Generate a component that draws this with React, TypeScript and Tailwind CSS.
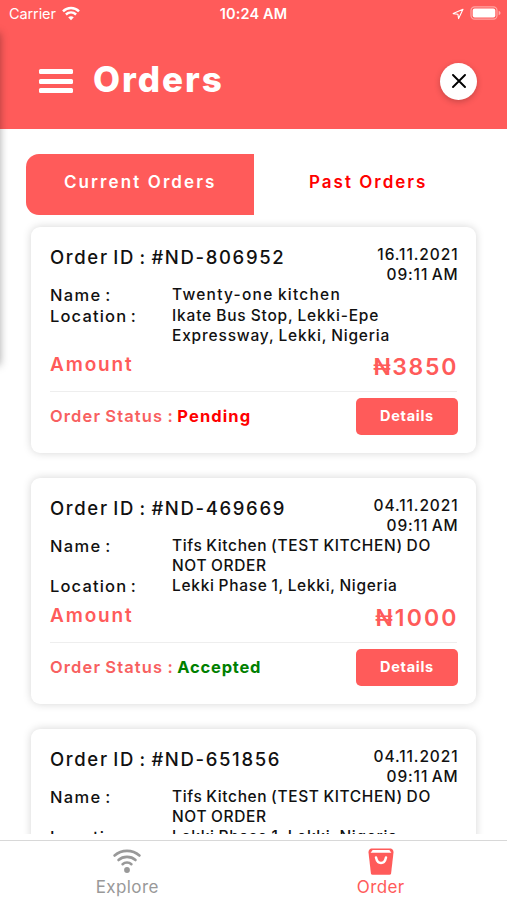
type Order = {
  id: string;
  date: string;
  dateClass: string;
  name: string;
  nameClass: string;
  location: string;
  locationClass: string;
  amount: string;
  amountClass: string;
  status: 'Pending' | 'Accepted';
};

const orders: Order[] = [
  {
    id: '#ND-806952',
    date: '16.11.2021',
    dateClass: 'tracking-[0.900px]',
    name: 'Twenty-one kitchen',
    nameClass: 'tracking-[1.250px] [word-spacing:-1px]',
    location: 'Ikate Bus Stop, Lekki-Epe Expressway, Lekki, Nigeria',
    locationClass: 'tracking-[0.820px] [word-spacing:-0.800px]',
    amount: '₦3850',
    amountClass: 'tracking-[1.670px] -mr-[1px]',
    status: 'Pending',
  },
  {
    id: '#ND-469669',
    date: '04.11.2021',
    dateClass: 'tracking-[0.880px]',
    name: 'Tifs Kitchen (TEST KITCHEN) DO NOT ORDER',
    nameClass: 'tracking-[0.640px] [word-spacing:-1px]',
    location: 'Lekki Phase 1, Lekki, Nigeria',
    locationClass: 'tracking-[0.710px] [word-spacing:-1px]',
    amount: '₦1000',
    amountClass: 'tracking-[2.100px] -mr-[1.500px]',
    status: 'Accepted',
  },
  {
    id: '#ND-651856',
    date: '04.11.2021',
    dateClass: 'tracking-[0.880px]',
    name: 'Tifs Kitchen (TEST KITCHEN) DO NOT ORDER',
    nameClass: 'tracking-[0.640px] [word-spacing:-1px]',
    location: 'Lekki Phase 1, Lekki, Nigeria',
    locationClass: 'tracking-[0.710px] [word-spacing:-1px]',
    amount: '₦1000',
    amountClass: 'tracking-[2.100px] -mr-[1.500px]',
    status: 'Accepted',
  },
];

function WifiFan({ className }: { className: string }) {
  return (
    <svg viewBox="0 0 18 14" className={className} fill="none" stroke="currentColor">
      <path d="M1 4.800C5.500.5 12.500.5 17 4.800" strokeWidth="2.500" />
      <path d="M3.900 8C6.900 5.200 11.100 5.200 14.100 8" strokeWidth="2.400" />
      <path d="M9 13.700 6.200 10.800Q9 8.500 11.800 10.800Z" fill="currentColor" stroke="none" />
    </svg>
  );
}

function StatusBar() {
  return (
    <div className="grid h-7 grid-cols-3 items-center pr-[5px] pl-[9px] text-[14.500px] text-white">
      <div className="flex items-center gap-[6px]">
        <span className="tracking-[-0.100px]">Carrier</span>
        <WifiFan className="-mt-[2px] h-[15px] w-[18px]" />
      </div>
      <span className="-ml-1 text-center font-semibold tracking-[0.140px]">10:24 AM</span>
      <div className="flex items-center justify-end gap-[6px]">
        <svg viewBox="0 0 12 12" className="h-3 w-3" fill="none" stroke="white" strokeWidth="1.100" strokeLinejoin="round">
          <path d="M11 1.200 6.600 10.600 5.900 6.200 1.200 5.600Z" />
        </svg>
        <svg viewBox="0 0 32 14" className="-mt-[2px] h-[14px] w-8" fill="none">
          <rect x="1" y=".8" width="26" height="12.400" rx="3.600" stroke="white" strokeOpacity=".45" strokeWidth="1.200" />
          <rect x="2.700" y="2.500" width="22.600" height="9" rx="2" fill="white" />
          <path d="M28.700 4.800Q30.600 5.500 30.600 7T28.700 9.200Z" fill="white" fillOpacity=".5" />
        </svg>
      </div>
    </div>
  );
}

function Header() {
  return (
    <header className="h-[129px] shrink-0 bg-[#ff5b5a]">
      <StatusBar />
      <div className="flex h-[106px] items-center pr-[30px] pl-[39px]">
        <div className="flex w-[34px] flex-col gap-[4.500px]">
          <span className="h-[5px] rounded-[1.500px] bg-white" />
          <span className="h-[5px] rounded-[1.500px] bg-white" />
          <span className="h-[5px] rounded-[1.500px] bg-white" />
        </div>
        <h1 className="mt-[-4px] ml-[20px] text-[35px] leading-10 font-extrabold tracking-[2px] text-white">Orders</h1>
        <button className="ml-auto flex h-[37px] w-[37px] items-center justify-center rounded-full bg-white shadow-[0_2px_6px_rgba(0,0,0,0.22)]">
          <svg viewBox="0 0 14 14" className="h-[14px] w-[14px]" stroke="black" strokeWidth="1.900" strokeLinecap="round">
            <path d="M1 1 13 13M13 1 1 13" />
          </svg>
        </button>
      </div>
    </header>
  );
}

function OrderCard({ order }: { order: Order }) {
  return (
    <article className="h-[226px] shrink-0 rounded-[9px] bg-white px-[19px] pt-[18px] shadow-[0_0_8px_rgba(0,0,0,0.17)]">
      <div className="flex h-10 justify-between font-medium">
        <h2 className="text-[18.500px] leading-6 font-medium tracking-[1.650px] whitespace-nowrap [word-spacing:-2px]">
          Order ID : {order.id}
        </h2>
        <div className="-mr-[1.500px] text-right text-[15.500px] leading-5">
          <div className={order.dateClass}>{order.date}</div>
          <div className="tracking-[0.850px] [word-spacing:-1.500px]">09:11 AM</div>
        </div>
      </div>
      <dl className="grid grid-cols-[122px_1fr] text-[15.500px] leading-5 font-medium">
        <dt className="text-[16.500px] leading-[21px] tracking-[1.350px] [word-spacing:-2px]">Name :</dt>
        <dd className={order.nameClass}>{order.name}</dd>
        <dt className="text-[16.500px] leading-[21px] tracking-[1.150px] [word-spacing:-2px]">Location :</dt>
        <dd className={`pr-8 ${order.locationClass}`}>{order.location}</dd>
      </dl>
      <div className="flex h-[46px] items-start justify-between border-b border-[#eeeeee] font-semibold text-[#ff5b5a]">
        <span className="pt-[7px] text-[19px] leading-6 tracking-[1.850px]">Amount</span>
        <span className={`pt-[7.500px] text-[23px] leading-[27px] ${order.amountClass}`}>{order.amount}</span>
      </div>
      <div className="-mr-px flex h-[49px] items-center justify-between">
        <div className="-mt-[2px] flex gap-[3.500px] text-[16.500px] leading-5 whitespace-nowrap">
          <span className="font-semibold tracking-[1.120px] text-[#f8605f] [word-spacing:-1px]">Order Status :</span>
          {order.status === 'Pending' ? (
            <span className="font-bold tracking-[1.100px] text-[#ff0000]">Pending</span>
          ) : (
            <span className="font-bold tracking-[0.780px] text-[#008000]">Accepted</span>
          )}
        </div>
        <button className="h-[37px] w-[102px] rounded-[5px] bg-[#ff5b5a] pb-px text-[14.500px] font-bold tracking-[0.700px] text-white">
          Details
        </button>
      </div>
    </article>
  );
}

function TabBar() {
  return (
    <nav className="grid h-[60px] shrink-0 grid-cols-2 border-t border-[#d8d8d8] bg-white text-[17px] leading-5">
      <div className="flex flex-col items-center gap-[3px] pt-[8px] pl-px text-[#999999]">
        <svg viewBox="0 0 28 25" className="h-[25px] w-7" fill="none" stroke="currentColor" strokeWidth="2.600" strokeLinecap="round">
          <path d="M1.600 6.500C8.600.3 19.400.3 26.400 6.500" />
          <path d="M5.500 11C10.200 6.800 17.800 6.800 22.500 11" />
          <path d="M9.600 15.200C12 13 16 13 18.400 15.200" />
          <circle cx="14" cy="21" r="2.900" fill="currentColor" stroke="none" />
        </svg>
        <span className="tracking-[0.400px]">Explore</span>
      </div>
      <div className="flex flex-col items-center gap-[2px] pt-[7px] pl-px text-[#ff5b5a]">
        <svg viewBox="0 0 26 27" className="h-[27px] w-[26px]">
          <path
            d="M3.200.6H22.800Q25.600 1.500 25.500 4.500L23.100 25.200Q22.900 26.800 21.400 26.800H4.600Q3.100 26.800 2.900 25.200L.5 4.500Q.4 1.500 3.200.6Z"
            fill="currentColor"
          />
          <path d="M4.700 2H21.300L23.400 4.700H2.600Z" fill="white" />
          <path d="M8 9.400Q9.200 14.900 13 14.900T18 9.400" fill="none" stroke="white" strokeWidth="2.500" strokeLinecap="round" />
        </svg>
        <span className="tracking-[0.400px]">Order</span>
      </div>
    </nav>
  );
}

export default function App() {
  return (
    <div className="relative flex h-[900px] w-[507px] flex-col overflow-hidden bg-white font-['Inter',sans-serif] text-[#111111]">
      <Header />
      <div className="mx-[26px] mt-[25px] grid h-[61px] shrink-0 grid-cols-2 text-[17px] font-semibold">
        <button className="rounded-l-[13px] bg-[#ff5b5a] pb-[3px] pl-[1px] tracking-[2.100px] text-white">Current Orders</button>
        <button className="pb-[3px] pl-[2px] tracking-[2px] text-[#ff0000]">Past Orders</button>
      </div>
      <main className="flex h-[619px] shrink-0 flex-col gap-[25px] overflow-hidden px-[31px] pt-[12px]">
        {orders.map((order) => (
          <OrderCard key={order.id} order={order} />
        ))}
      </main>
      <div className="mt-auto">
        <TabBar />
      </div>
      <div className="pointer-events-none absolute top-[33px] -left-5 h-[332px] w-5 shadow-[0_0_9px_rgba(0,0,0,0.350)]" />
    </div>
  );
}
